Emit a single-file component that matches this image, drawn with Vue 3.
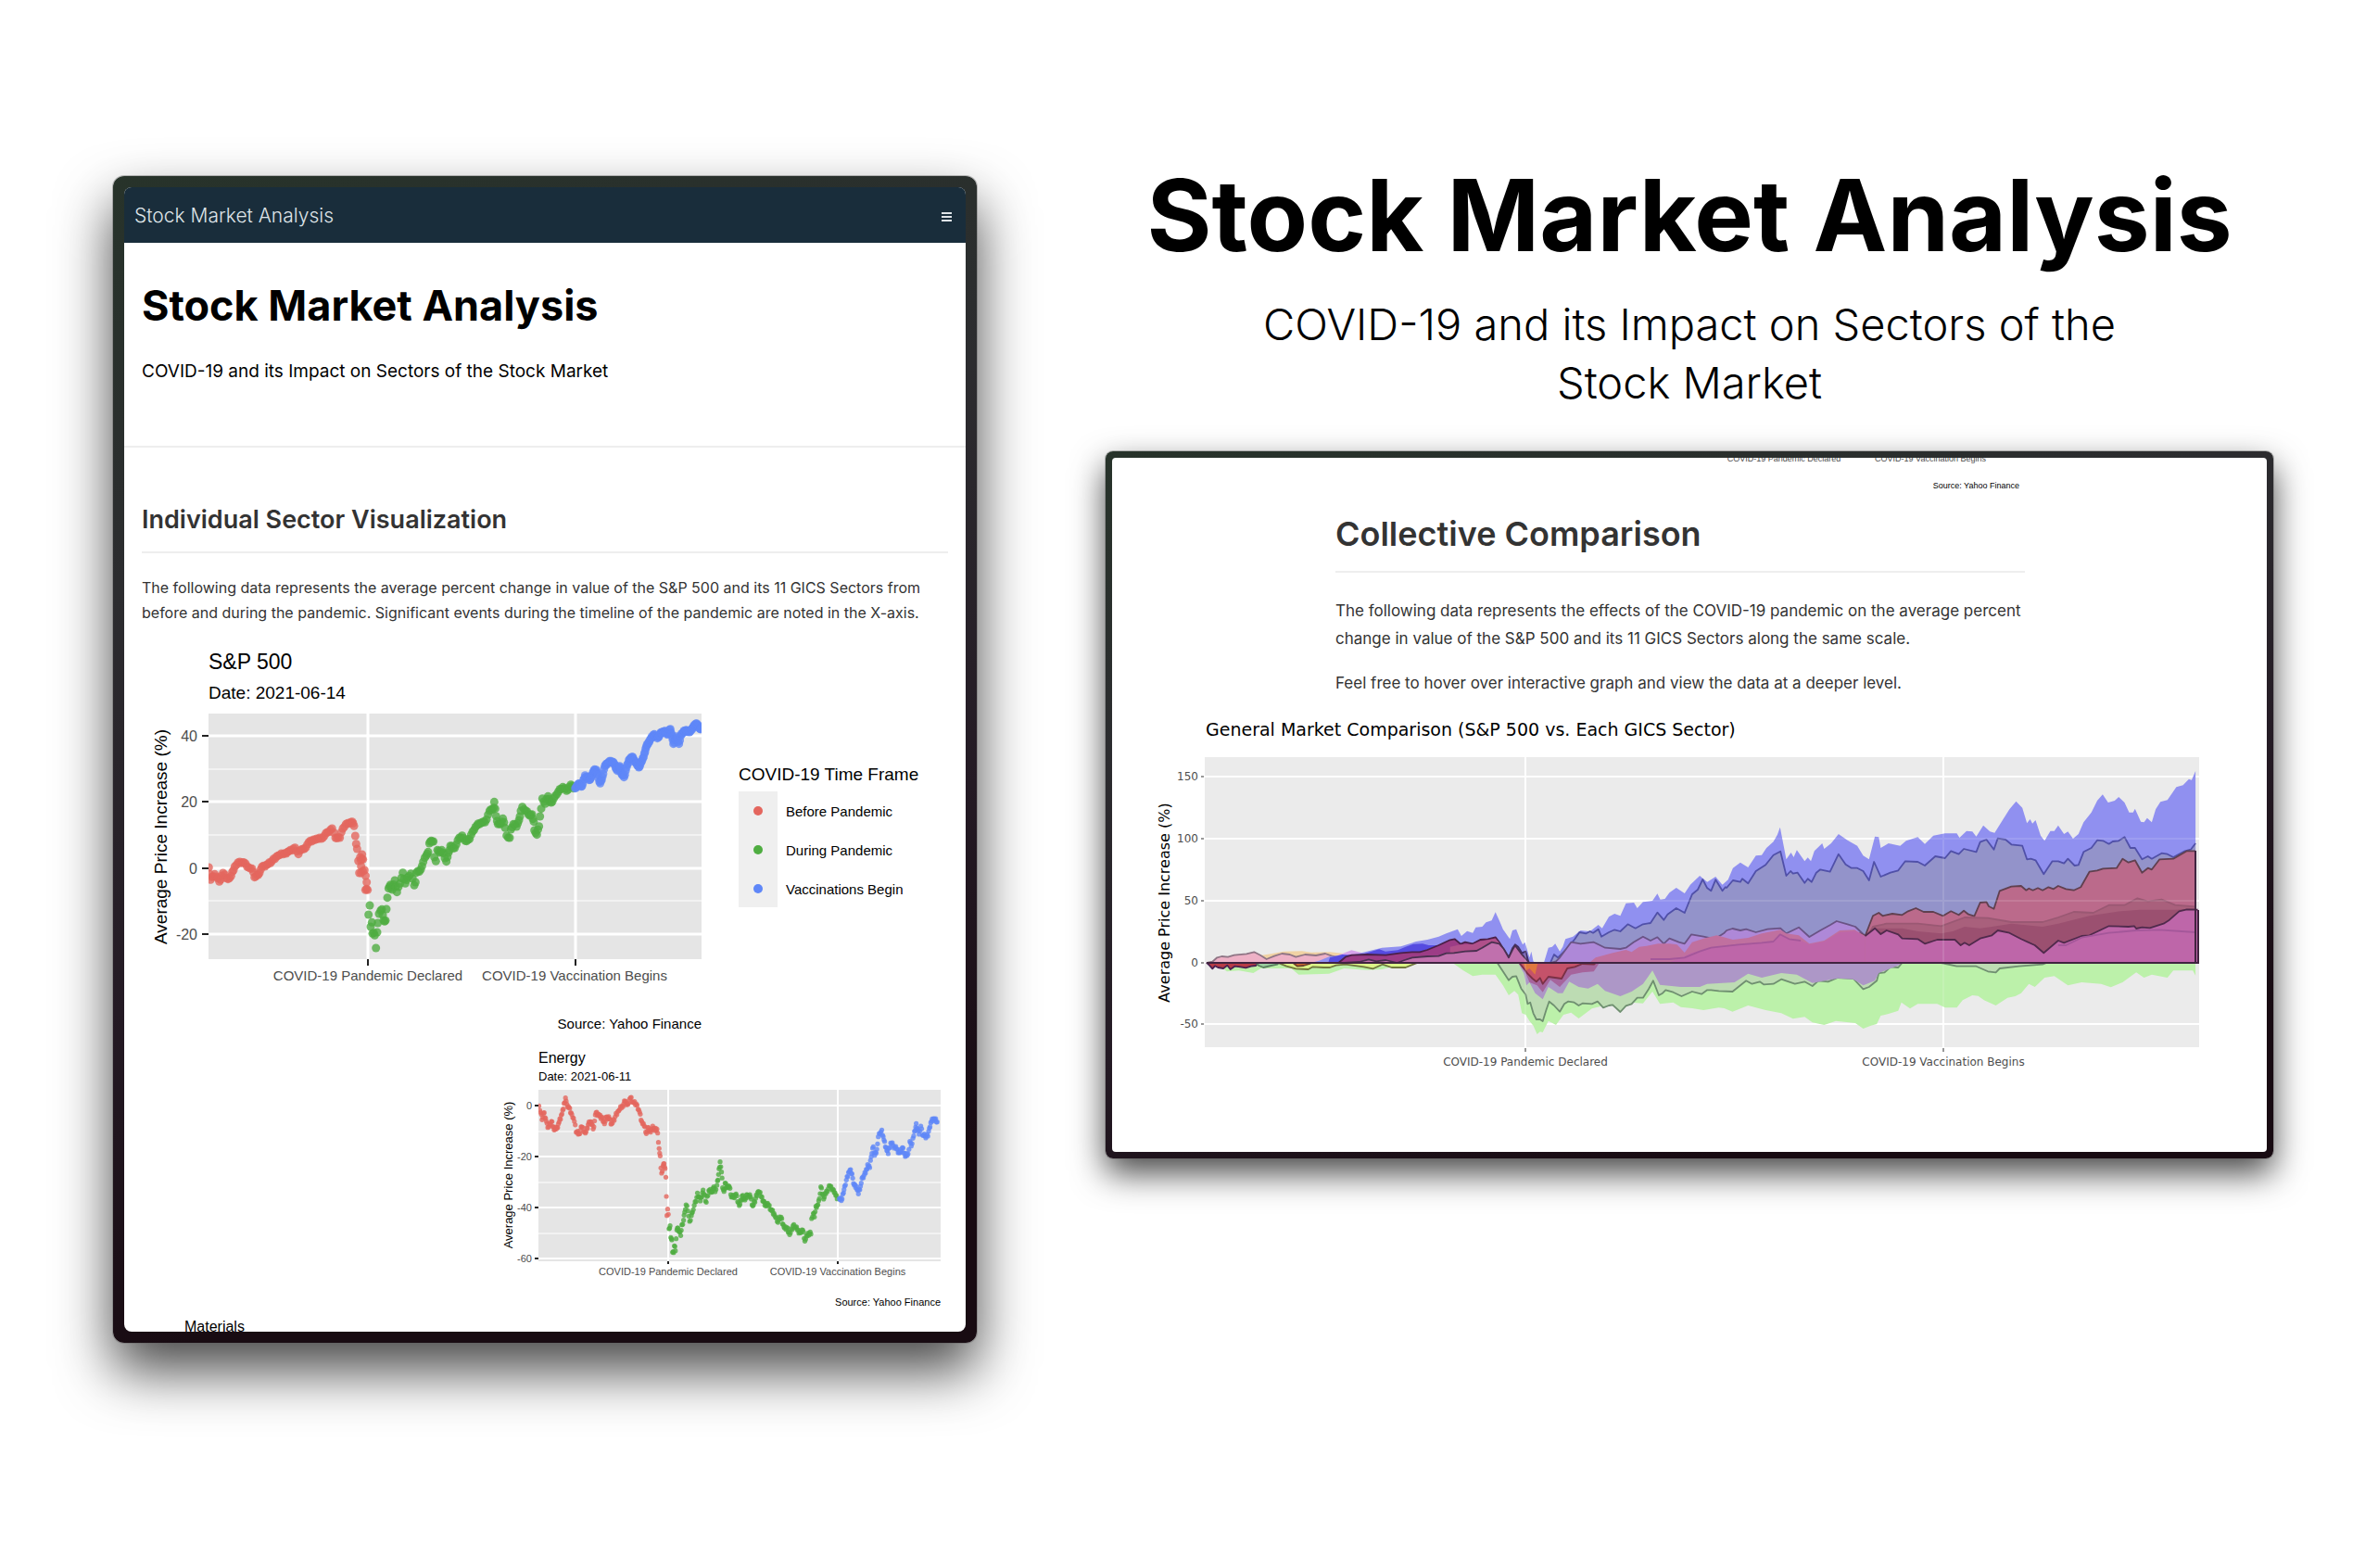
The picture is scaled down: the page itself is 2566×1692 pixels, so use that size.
<script setup>
// Knots are listed as flat x, y runs; each run carries its own scale to the chart's canvas.
const place = (runs) =>
  runs.flatMap(({ kx, ky = 1 / 3, dx, dy, at }) => {
    const out = []
    for (let i = 0; i < at.length; i += 2) out.push([at[i] * kx + dx, at[i + 1] * ky + dy])
    return out
  })

// Fill the trading days that lie between two knots.
const daily = (knots, step, spread = 0.5) => {
  const out = []
  knots.forEach(([x, y], i) => {
    out.push({ x, y })
    const next = knots[i + 1]
    if (!next) return
    const n = Math.floor(Math.abs(next[0] - x) / step)
    for (let k = 1; k <= n; k++) {
      const t = k / (n + 1)
      const wobble = (((i * 7 + k * 3) % 5) - 2) * spread
      out.push({ x: x + (next[0] - x) * t, y: y + (next[1] - y) * t + wobble })
    }
  })
  return out
}

const spA = (at) => ({ kx: 1 / 3, dx: 66, dy: 70, at })
const spB = (at) => ({ kx: 1 / 3, dx: 346, dy: 70, at })
const sp500 = [
  { color: '#e4665e', days: daily(place([spA([76,528,82,568,95,550,110,574,122,546,138,566,148,556,160,525,176,510,190,512,205,528,216,532,224,560,236,552,248,526,262,520,280,508,300,490,322,482,335,476,355,464,366,485,375,470,385,468,400,446,415,438,430,436,445,432,460,414,475,402,486,432,500,432,510,402,525,385,540,380,546,394,550,426,553,452,556,468,560,507,572,486,568,505,575,502,563,546,580,537,587,576,583,601,590,601])]), 2) },
  { color: '#4fad41', days: daily(place([
    spA([593,681,597,651,600,720,604,706,606,742,610,740,613,748,617,789,621,738,623,708,627,678,632,668,636,664,642,700,648,700,651,663,654,626,658,596,664,584,670,600,678,570,685,608,695,580,704,545,712,580,720,560,730,548,741,586,745,576,748,545,762,535,770,510,780,490,786,478,790,450,796,442,803,444,806,495,811,508,816,472,824,480,830,472,845,509,852,480,858,458,872,465,882,440,896,425]),
    spB([66,442,80,436,90,412,104,392,116,384,130,382,145,345,158,335,160,316,163,338,166,362,172,388,180,388,188,370,195,400,200,425,210,432,214,405,222,388,232,396,240,375,246,345,251,332,262,345,275,360,282,356,288,380,290,408,298,422,305,395,308,363,312,338,316,305,325,322,334,298,340,315,348,315,358,296,368,282,382,268,394,280,408,260,416,272]),
  ]), 2) },
  { color: '#5f87f8', days: daily(place([spB([422,272,432,258,444,265,454,230,462,238,470,244,482,215,490,212,498,240,503,256,510,235,518,200,528,190,538,184,548,192,558,215,566,200,572,225,580,236,588,205,596,180,606,170,616,186,628,204,638,184,646,160,652,138,664,115,678,97,688,110,700,92,710,88,722,96,730,80,736,105,740,128,750,104,758,128,766,95,780,84,792,90,805,72,815,62,826,80,830,75])]), 1) },
]

const en = (at) => [{ kx: 600 / 1568, dx: 366, dy: -45, at }]
const energy = [
  { color: '#e4665e', days: daily(place(en([213,340,218,362,222,385,228,362,234,390,238,410,248,390,256,418,264,410,270,392,276,370,282,350,288,314,292,335,298,345,306,368,313,390,318,425,326,430,334,408,344,428,352,400,360,392,366,415,374,362,382,368,390,378,398,398,404,375,412,382,418,398,428,375,438,356,448,340,456,326,464,335,471,314,478,328,490,338,497,360,503,390,510,405,516,430,522,410,528,425,534,405,540,420,546,415,548,428,550,458,552,478,555,502,557,541,559,558,563,534,566,527,569,543,571,571,574,695,576,674,578,691])), 1, 1) },
  { color: '#4fad41', days: daily(place(en([580,738,583,728,585,766,588,774,590,814,593,815,595,793,598,809,600,770,602,742,605,735,609,748,613,760,616,725,621,710,624,684,628,660,633,680,638,714,643,695,646,684,651,662,656,650,660,622,668,648,676,612,685,652,692,614,700,618,706,602,710,618,715,597,718,580,721,544,724,521,726,537,728,554,731,605,735,617,738,590,744,602,750,602,756,635,762,635,769,625,778,663,786,632,794,645,801,628,810,635,816,664,824,640,832,617,842,635,850,662,858,655,870,680,878,695,885,714,896,700,904,732,912,735,920,757,932,724,942,742,950,750,957,742,963,778,972,752,980,755,982,705,987,688,990,700,994,665,1000,660,1004,640,1008,602,1016,642,1024,615,1034,600,1044,612,1050,630,1054,641])), 1, 1) },
  { color: '#5f87f8', days: daily(place(en([1060,640,1068,641,1072,622,1075,600,1080,580,1086,555,1090,548,1096,560,1098,574,1102,596,1108,600,1114,625,1120,600,1126,570,1134,558,1140,530,1146,540,1150,505,1156,472,1160,500,1166,480,1170,440,1175,430,1180,418,1186,450,1192,475,1198,495,1205,460,1212,468,1222,480,1230,492,1238,475,1246,504,1254,495,1259,455,1263,470,1270,437,1274,420,1277,397,1281,415,1285,432,1290,405,1295,435,1302,438,1310,438,1314,412,1320,390,1328,382,1336,392])), 1, 1) },
]

const legend = [
  { label: 'Before Pandemic', color: '#e4665e' },
  { label: 'During Pandemic', color: '#4fad41' },
  { label: 'Vaccinations Begin', color: '#5f87f8' },
]

const E = (at) => ({ kx: 1 / 2.45, dx: 30, dy: 40, at })
const L = (at) => ({ kx: 1 / 2.3758, dx: 600, dy: 40, at })
const O = (at) => ({ kx: 1 / 3, dx: 95, dy: 210, at })
const ZERO = 279
const area = (fill, line, ...runs) => {
  const pts = place(runs)
  const top = pts.map(([x, y]) => `${x.toFixed(1)},${y.toFixed(1)}`).join(' ')
  return { fill, line, top, shape: `${pts[0][0].toFixed(1)},${ZERO} ${top} ${pts[pts.length - 1][0].toFixed(1)},${ZERO}` }
}
const areas = [
  area('#bcf1aa', '', E([200,717,230,745,262,742,300,750,320,735,400,735,420,755,500,752,540,735,600,740,640,738,700,720,830,720,855,742,880,760,905,755,940,755,960,790,975,822,990,808,1000,820,1010,880,1020,885,1030,905,1040,920,1050,948,1058,940,1065,942,1080,905,1100,918,1120,885,1140,878,1160,897,1195,865,1220,857,1240,850,1270,870,1300,845,1330,848,1355,810,1375,850,1410,845,1430,860,1460,864,1490,870,1530,862,1545,864]), L([165,875,205,855,250,870,290,880,320,898,350,892,370,910,400,918,430,905,480,912,500,930,520,920,535,915,545,888,565,882,590,872,598,845,620,865,640,850,690,850,710,862,740,862,755,838,780,822,795,824,810,838,840,855,870,830,890,825,905,815,925,785,940,795,965,765,990,760,1025,790,1060,780,1110,785,1135,796,1165,780,1200,748,1220,765,1240,755,1280,765,1295,742,1345,742,1352,758])),
  area('#bddcb3', '#6f8f70', E([945,717,960,745,975,773,985,762,995,760,1008,800,1020,820,1025,850,1032,845,1040,880,1048,900,1058,900,1065,906,1074,870,1082,842,1095,855,1110,875,1122,850,1132,842,1148,845,1160,855,1170,848,1195,850,1210,842,1225,862,1240,855,1250,853,1270,876,1285,856,1300,850,1315,830,1330,830,1345,802,1357,775,1372,822,1382,815,1390,805,1410,812,1432,825,1460,810,1485,818,1500,805]), L([110,805,130,808,165,810,200,775,215,785,235,778,245,787,270,785,290,770,325,785,350,778,370,792,385,775,410,778,435,765,475,768,500,802,515,795,535,775,540,750,555,748,570,730,590,732,600,717,700,717,740,728,790,728,820,745,840,748,850,735,900,728,960,722,970,717])),
  area('#ad97c7', '', E([1000,717,1010,740,1015,750,1022,790,1030,780,1045,815,1065,835,1080,795,1105,815,1118,815,1135,778,1160,795,1185,800,1210,785,1230,808,1270,825,1300,810,1330,785,1355,742,1375,788,1430,795,1480,795]), L([100,785,170,780,205,752,240,765,290,750,330,755,370,782,435,767,475,770,500,790,530,775,540,750,590,725,600,717])),
  area('#a6649c', '', E([1005,717,1018,745,1030,780,1050,790,1065,812,1085,772,1110,795,1140,755,1170,748,1200,745,1215,717])),
  area('#c5526a', '#7a3045', E([1003,717,1018,740,1025,752,1038,768,1048,778,1058,766,1065,785,1080,762,1115,768,1130,735,1150,730,1170,720,1200,722,1205,717])),
  area('#e0783f', '', E([1012,717,1022,742,1030,735,1045,755,1052,717])),
  area('#b83c46', '#4b2050', O([20,206,30,215,40,226,48,217,58,222,75,225,88,215,98,228,112,218,130,220,148,223,165,218,180,216,190,206])),
  area('#9ccfa0', '#5b7f60', O([180,206,190,216,205,222,230,216,250,212,255,206])),
  area('#dcf688', '#70763c', O([250,206,280,218,310,226,350,228,365,220,400,222,420,222,440,215,470,212,530,220,560,226,590,212,620,222,665,222,690,212,705,206])),
  area('#cf6a30', '#70402c', O([300,206,315,218,335,216,355,210,360,206])),
  area('#f0d2a4', '', O([200,182,230,178,270,170,330,169,360,173,420,172,460,176,500,182])),
  area('#d6a2ea', '', O([360,206,400,190,440,185,490,166,530,176,560,178])),
  area('#eeb1c6', '#8f7585', O([25,206,40,203,55,190,70,186,90,188,110,182,150,178,175,172,195,182,215,195,240,185,265,177,290,180,310,188,340,180,375,183,405,177,425,184,450,190,480,206])),
  area('#9090f0', '', O([360,206,385,200,420,186]), E([560,692,600,680,640,668,690,664,730,648,760,642,790,632,810,622,840,608,850,630,865,614,880,620,888,602,905,600,915,586,930,580,940,553,950,580,960,608,978,640,985,612,995,608,1005,640,1012,658,1018,650,1030,700,1035,680,1040,712,1045,717,1068,717,1080,668,1090,665,1098,655,1110,680,1118,665,1125,640,1145,632,1165,612,1190,615,1212,594,1222,605,1240,568,1255,558,1270,565,1285,524,1306,522,1315,540,1330,520,1355,516,1368,493,1376,512,1388,510,1400,490,1418,474,1440,492,1455,464,1480,435,1500,455,1522,438,1540,464,1555,448]), L([166,410,185,392,205,408,225,370,240,368,252,345,270,325,280,302,287,278,303,382,315,360,322,375,330,352,350,388,358,376,366,388,375,355,395,330,400,348,418,330,437,300,460,320,485,338,500,370,515,382,530,308,540,310,545,345,565,330,595,338,610,322,640,310,658,332,680,305,710,298,740,298,747,312,765,290,780,292,790,308,808,272,825,292,837,296,860,250,875,220,892,194,908,215,920,265,928,252,934,266,942,255,955,305,965,322,980,290,990,290,1000,272,1015,300,1025,292,1038,315,1052,300,1065,262,1085,230,1100,192,1114,172,1128,198,1145,192,1155,180,1170,198,1182,230,1192,230,1197,218,1212,260,1220,262,1228,248,1240,262,1250,220,1262,196,1280,190,1303,148,1320,142,1335,122,1342,125,1352,96])),
  area('#554be0', '', O([415,206,420,190,460,180,500,182,530,178,580,163,600,170,640,166,665,155,690,146,720,145,740,150,790,150,825,135,850,206])),
  area('#9393ca', '#5050a8', E([1085,717,1095,690,1105,700,1130,670,1150,640,1162,618,1180,622,1190,615,1198,620,1212,608,1220,632,1240,618,1255,610,1270,615,1290,592,1310,605,1330,592,1350,588,1368,554,1385,578,1395,560,1418,540,1440,555,1460,495,1475,480,1488,447,1500,475,1510,484,1522,448,1540,484,1548,472]), L([150,474,166,450,185,455,190,445,205,460,225,420,250,400,270,368,288,356,303,435,314,420,320,428,332,425,350,458,358,445,368,455,380,425,390,415,415,422,437,365,455,398,470,410,485,410,500,420,515,450,528,390,545,438,570,425,590,418,608,388,640,390,658,402,685,372,710,378,725,355,745,365,758,348,790,358,800,326,816,318,835,350,845,314,865,318,880,334,908,338,920,382,930,380,942,385,963,430,985,388,1000,388,1015,395,1025,380,1042,402,1052,400,1065,358,1085,345,1100,320,1115,322,1130,332,1140,324,1155,322,1170,310,1185,345,1197,345,1215,382,1230,372,1240,380,1265,362,1280,365,1295,375,1325,355,1340,350,1352,330])),
  area('#ae88d8', '#6a5385', E([1085,717,1100,712,1110,700,1140,650,1165,655,1200,650,1230,668,1270,672,1285,668,1305,650,1330,632,1350,645,1368,634,1385,655,1400,638,1425,650,1440,655,1458,625,1490,632,1520,640,1545,620]), L([150,612,165,606,185,612,200,608,225,618,255,608,288,605,303,622,335,602,362,633,390,612,415,595,432,582,460,592,480,600,505,630,530,605,560,600])),
  area('#7763b5', '#3f2e66', E([945,652,975,700,985,670,992,658,1000,665,1010,685,1020,680,1028,717])),
  area('#9c3c86', '#4a2048', E([525,717,545,697,560,692,600,690,650,692,690,685,720,682,740,682,760,675,790,660,820,643,832,640,848,656,860,650,880,655,900,642,920,640,940,634,950,650,975,700])),
  area('#b0508a', '', E([820,665,848,658,880,657,900,647,940,638,950,652,960,690])),
  area('#c070ad', '#4a3050', E([540,717,580,714,605,706,625,712,650,708,680,717,700,708,720,700,760,696,790,695,810,686,830,685,860,680,890,678,905,668,930,650,950,655,962,672,975,700,985,675,992,661,1010,690,1030,717])),
  area('#bb6a8b', '#60404f', L([490,620,505,630,525,565,540,555,550,565,575,558,600,562,615,550,635,540,655,552,680,552,705,565,725,550,745,562,758,548,770,560,785,566,800,522,816,520,822,534,835,542,850,484,880,470,905,468,918,482,925,476,935,482,948,475,960,482,975,472,988,478,1000,468,1020,478,1040,482,1058,472,1080,422,1100,418,1115,412,1150,410,1165,380,1180,392,1197,385,1215,425,1230,410,1240,415,1260,382,1295,380,1330,355,1352,355])),
  area('#a9607c', '#9a5873', L([510,630,525,600,560,590,640,590,700,598,760,570,820,572,880,585,960,585,1000,570,1040,552,1090,555,1130,530,1170,530,1203,508,1230,518,1265,512,1300,530,1352,535])),
  area('#9b5070', '', L([530,605,600,605,640,615,700,622,730,615,760,600,800,605,830,600,880,590,960,600,1000,590,1080,565,1160,550,1210,545,1300,545,1352,540])),
  area('#c0709f', '', E([1190,715,1205,700,1250,685,1285,675,1300,682,1320,665,1340,662,1370,655,1400,655,1420,658,1440,684,1460,650,1490,638,1525,628,1550,636]), L([166,642,205,636,240,622,288,610,303,622,335,628,362,655,400,645,440,612,478,610,505,630])),
  area('#be66a9', '', L([0,717,30,702,60,685,110,668,180,658,240,652,270,648,287,625,310,640,340,645,362,657,400,648,440,618,480,614,505,632])),
  area('#be66a9', '#502a4c', L([505,630,530,605,545,624,560,612,590,625,600,638,640,640,658,655,690,642,735,642,750,660,760,652,772,660,800,638,830,628,845,612,875,620,905,640,940,660,963,685,1000,645,1015,652,1060,630,1080,628,1130,598,1180,600,1195,598,1200,606,1215,602,1235,604,1270,590,1285,578,1310,550,1330,544,1358,545])),
  area('none', '#a4579a', E([1350,705,1400,705,1440,700,1480,680]), L([110,668,180,658,240,652,270,648,287,625,310,640,340,645])),
  area('none', '#a4579a', L([1000,660,1020,660,1060,635,1130,620,1200,612,1260,610,1352,618])),
]
</script>

<template>
  <main class="showcase">
    <section class="device tall">
      <div class="screen tall-screen">
        <nav class="navbar">
          <a class="brand" href="#top">Stock Market Analysis</a>
          <button class="menu" type="button" aria-label="Menu"><i></i><i></i><i></i></button>
        </nav>
        <header class="hero">
          <h1>Stock Market Analysis</h1>
          <p>COVID-19 and its Impact on Sectors of the Stock Market</p>
        </header>
        <article class="report">
          <h2>Individual Sector Visualization</h2>
          <p>The following data represents the average percent change in value of the S&amp;P 500 and its 11 GICS Sectors from before and during the pandemic. Significant events during the timeline of the pandemic are noted in the X-axis.</p>
        </article>

        <svg class="plot ggplot" viewBox="0 0 908 435" role="img" aria-label="S&amp;P 500 average price increase">
          <clipPath id="sp-clip"><rect x="91" y="80" width="532" height="265" /></clipPath>
          <text x="91" y="32" font-size="23">S&amp;P 500</text>
          <text x="91" y="64" font-size="19">Date: 2021-06-14</text>
          <rect x="91" y="80" width="532" height="265" fill="#e5e5e5" />
          <g stroke="#fff" stroke-width="1">
            <path d="M91 140H623M91 211H623M91 282H623" />
            <path stroke-width="3" d="M91 104H623M91 175H623M91 247H623M91 318H623M263 80V345M487 80V345" />
          </g>
          <path stroke="#222" stroke-width="2" d="M84 104H91M84 175H91M84 247H91M84 318H91M263 345V352M487 345V352" />
          <g clip-path="url(#sp-clip)">
            <g v-for="s in sp500" :key="s.color" :fill="s.color" fill-opacity="0.8">
              <circle v-for="(d, i) in s.days" :key="i" :cx="d.x" :cy="d.y" r="4.5" />
            </g>
          </g>
          <g font-size="16" fill="#4d4d4d" text-anchor="end">
            <text x="79" y="110">40</text>
            <text x="79" y="181">20</text>
            <text x="79" y="253">0</text>
            <text x="79" y="324">-20</text>
          </g>
          <g font-size="15" fill="#4d4d4d" text-anchor="middle">
            <text x="263" y="368">COVID-19 Pandemic Declared</text>
            <text x="486" y="368">COVID-19 Vaccination Begins</text>
          </g>
          <text transform="translate(46 213) rotate(-90)" font-size="19" text-anchor="middle">Average Price Increase (%)</text>
          <text x="623" y="420" font-size="15" text-anchor="end">Source: Yahoo Finance</text>
          <text x="663" y="152" font-size="19">COVID-19 Time Frame</text>
          <rect x="663" y="164" width="42" height="125" fill="#efefef" />
          <g v-for="(l, i) in legend" :key="l.label">
            <circle cx="684" :cy="185 + i * 42" r="5" :fill="l.color" />
            <text x="714" :y="191 + i * 42" font-size="15">{{ l.label }}</text>
          </g>
        </svg>

        <svg class="plot ggplot" viewBox="0 0 908 300" role="img" aria-label="Energy average price increase">
          <clipPath id="en-clip"><rect x="447" y="51" width="434" height="185" /></clipPath>
          <text x="447" y="22" font-size="16">Energy</text>
          <text x="447" y="41" font-size="13">Date: 2021-06-11</text>
          <rect x="447" y="51" width="434" height="185" fill="#e5e5e5" />
          <g stroke="#fff" stroke-width="1">
            <path d="M447 96H881M447 151H881M447 206H881" />
            <path stroke-width="2" d="M447 68H881M447 123H881M447 178H881M447 233H881M587 51V236M770 51V236" />
          </g>
          <path stroke="#222" stroke-width="2" d="M443 68H447M443 123H447M443 178H447M443 233H447M587 236V239M770 236V239" />
          <g clip-path="url(#en-clip)">
            <g v-for="s in energy" :key="s.color" :fill="s.color" fill-opacity="0.8">
              <circle v-for="(d, i) in s.days" :key="i" :cx="d.x" :cy="d.y" r="2.6" />
            </g>
          </g>
          <g font-size="11" fill="#4d4d4d" text-anchor="end">
            <text x="440" y="72">0</text>
            <text x="440" y="127">-20</text>
            <text x="440" y="182">-40</text>
            <text x="440" y="237">-60</text>
          </g>
          <g font-size="11" fill="#4d4d4d" text-anchor="middle">
            <text x="587" y="251">COVID-19 Pandemic Declared</text>
            <text x="770" y="251">COVID-19 Vaccination Begins</text>
          </g>
          <text transform="translate(419 143) rotate(-90)" font-size="13" text-anchor="middle">Average Price Increase (%)</text>
          <text x="881" y="284" font-size="11" text-anchor="end">Source: Yahoo Finance</text>
        </svg>
        <h3 class="next">Materials</h3>
      </div>
    </section>

    <section class="side">
      <header class="title">
        <h1>Stock Market Analysis</h1>
        <p>COVID-19 and its Impact on Sectors of the Stock Market</p>
      </header>
      <div class="device wide">
        <div class="screen wide-screen">
          <svg class="plot ggplot" viewBox="0 0 1246 50" role="img" aria-label="End of the previous chart">
            <g font-size="9" fill="#4d4d4d" text-anchor="middle">
              <text x="725" y="4">COVID-19 Pandemic Declared</text>
              <text x="883" y="4">COVID-19 Vaccination Begins</text>
            </g>
            <text x="979" y="33" font-size="9" text-anchor="end">Source: Yahoo Finance</text>
          </svg>
          <article class="collective">
            <h2>Collective Comparison</h2>
            <p>The following data represents the effects of the COVID-19 pandemic on the average percent change in value of the S&amp;P 500 and its 11 GICS Sectors along the same scale.</p>
            <p>Feel free to hover over interactive graph and view the data at a deeper level.</p>
          </article>
          <svg class="plot plotly" viewBox="0 0 1246 420" role="img" aria-label="General market comparison">
            <text x="101" y="34" font-size="19">General Market Comparison (S&amp;P 500 vs. Each GICS Sector)</text>
            <rect x="100" y="57" width="1073" height="313" fill="#ebebeb" />
            <path stroke="#fff" stroke-width="2" d="M100 78H1173M100 145H1173M100 212H1173M100 279H1173M100 345H1173M446 57V370M897 57V370" />
            <path stroke="#333" stroke-width="1" d="M96 78H99M96 145H99M96 212H99M96 279H99M96 345H99M446 371V375M897 371V375" />
            <g v-for="(a, i) in areas" :key="i">
              <polygon :points="a.shape" :fill="a.fill" />
              <polyline v-if="a.line" :points="a.top" fill="none" :stroke="a.line" stroke-width="1.8" stroke-linejoin="round" />
            </g>
            <g stroke="#fff" stroke-opacity="0.12" stroke-width="2">
              <path d="M446 57V370M897 57V370M100 145H1173M100 212H1173" />
            </g>
            <path stroke="#402440" stroke-width="2" fill="none" d="M102 279H1172V222M1169 158V279" />
            <g font-size="12" fill="#4d4d4d" text-anchor="end">
              <text x="93" y="82">150</text>
              <text x="93" y="149">100</text>
              <text x="93" y="216">50</text>
              <text x="93" y="283">0</text>
              <text x="93" y="349">-50</text>
            </g>
            <g font-size="12" fill="#4d4d4d" text-anchor="middle">
              <text x="446" y="390">COVID-19 Pandemic Declared</text>
              <text x="897" y="390">COVID-19 Vaccination Begins</text>
            </g>
            <text transform="translate(62 214) rotate(-90)" font-size="16" text-anchor="middle">Average Price Increase (%)</text>
          </svg>
        </div>
      </div>
    </section>
  </main>
</template>

<style>
body {
  margin: 0;
  background: #fff;
}
</style>

<style scoped>
.showcase {
  display: grid;
  grid-template-columns: 932fr 1260fr;
  column-gap: 139px;
  align-items: start;
  padding: 190px 113px 160px 122px;
  font-family: Inter, 'Liberation Sans', sans-serif;
  color: #000;
}
h1, h2, h3, p {
  margin: 0;
}
.device {
  background: linear-gradient(165deg, #27332a 0%, #2c2c2f 30%, #241a24 60%, #180b12 85%);
}
.tall {
  padding: 12px;
  border-radius: 12px;
  box-shadow: 0 0 0 1px #62626266, 0 30px 60px rgba(0, 0, 0, 0.72);
}
.wide {
  padding: 7px;
  border-radius: 8px;
  box-shadow: 0 0 0 1px #62626266, 0 16px 36px rgba(0, 0, 0, 0.72);
}
.screen {
  overflow: hidden;
  background: #fff;
}
.tall-screen {
  aspect-ratio: 908 / 1235;
  border-radius: 8px;
}
.wide-screen {
  aspect-ratio: 1246 / 749;
  border-radius: 4px;
}
.navbar {
  display: flex;
  align-items: center;
  justify-content: space-between;
  height: 60px;
  padding: 0 15px 0 11px;
  background: #192d3b;
}
.brand {
  font-size: 21px;
  font-weight: 300;
  color: #dfe4e8;
  text-decoration: none;
}
.menu {
  display: grid;
  gap: 2px;
  width: 11px;
  padding: 4px 0 0;
  border: 0;
  background: none;
}
.menu i {
  height: 2px;
  background: #dfe4e8;
}
.hero {
  padding: 40px 19px 65px;
  border-bottom: 2px solid #eee;
}
.hero h1 {
  font-size: 45px;
  line-height: 56px;
  font-weight: 700;
}
.hero p {
  margin-top: 28px;
  font-size: 19px;
  line-height: 30px;
}
.report {
  padding: 60px 19px 15px;
  color: #333;
}
.report h2 {
  padding-bottom: 16px;
  border-bottom: 2px solid #eee;
  font-size: 27px;
  line-height: 36px;
  font-weight: 600;
}
.report p {
  margin-top: 24px;
  font-size: 16px;
  line-height: 27px;
}
.plot {
  display: block;
  width: 100%;
}
.ggplot text {
  font-family: 'Liberation Sans', Arial, sans-serif;
}
.plotly text {
  font-family: 'DejaVu Sans', Verdana, sans-serif;
}
.next {
  padding-left: 65px;
  font: 400 16px/14px 'Liberation Sans', Arial, sans-serif;
}
.title {
  text-align: center;
}
.title h1 {
  font-size: 107px;
  line-height: 84px;
  font-weight: 700;
  white-space: nowrap;
}
.title p {
  width: 80%;
  margin: 44px auto 43px;
  font-size: 47px;
  line-height: 63px;
  font-weight: 300;
}
.collective {
  width: 744px;
  margin: 8px 0 8px 241px;
  color: #333;
}
.collective h2 {
  padding-bottom: 16px;
  border-bottom: 2px solid #eee;
  font-size: 36px;
  line-height: 48px;
  font-weight: 600;
}
.collective p {
  margin-top: 18px;
  font-size: 17px;
  line-height: 30px;
}
.collective h2 + p {
  margin-top: 26px;
}
</style>
